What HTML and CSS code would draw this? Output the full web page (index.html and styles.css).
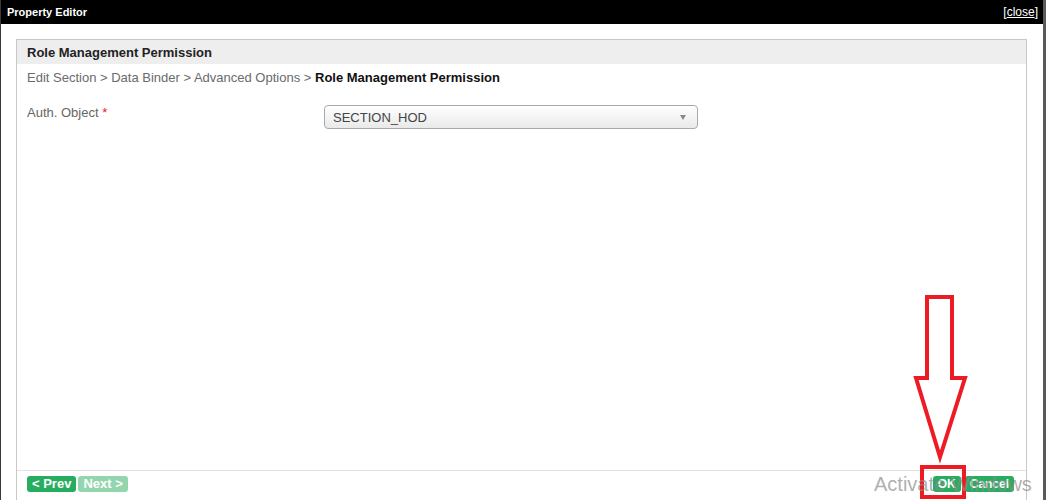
FILE: index.html
```html
<!DOCTYPE html>
<html>
<head>
<meta charset="utf-8">
<link rel="stylesheet" href="styles.css">
</head>
<body>
<div class="window">
  <div class="titlebar">
    <span class="title">Property Editor</span>
    <span class="close">[<a href="#">close</a>]</span>
  </div>
  <div class="content">
    <div class="panel">
      <div class="panel-head">Role Management Permission</div>
      <div class="crumbs">Edit Section &gt; Data Binder &gt; Advanced Options &gt; <b>Role Management Permission</b></div>
      <div class="form-row">
        <div class="label">Auth. Object <span class="req">*</span></div>
        <div class="select"><span>SECTION_HOD</span><span class="caret"></span></div>
      </div>
      <div class="footer">
        <div class="left-btns">
          <span class="btn">&lt; Prev</span>
          <span class="btn disabled">Next &gt;</span>
        </div>
        <div class="right-btns">
          <span class="btn small">OK</span>
          <span class="btn small">Cancel</span>
        </div>
      </div>
    </div>
  </div>
  <svg class="arrow" width="60" height="170" viewBox="0 0 60 170">
    <path d="M14 3 H39 V84 H52 L27 163 L3 84 H14 Z" fill="none" stroke="#ed1c24" stroke-width="4" stroke-linejoin="miter"/>
  </svg>
  <div class="redbox"></div>
  <div class="watermark">Activate Windows</div>
</div>
</body>
</html>
```
FILE: styles.css
```css
html, body {
  margin: 0;
  padding: 0;
  background: #fff;
}
body {
  font-family: "Liberation Sans", Arial, sans-serif;
  width: 1046px;
  height: 500px;
  overflow: hidden;
}
.window {
  position: relative;
  width: 1046px;
  height: 500px;
  overflow: hidden;
  border-left: 1px solid #3a3a3a;
  border-right: 3px solid #5a5a5a;
  box-sizing: border-box;
}
.titlebar {
  height: 24px;
  background: #000;
  color: #fff;
  display: flex;
  align-items: center;
  justify-content: space-between;
  padding: 0 8px 0 6px;
  font-size: 12px;
  margin-right: -3px;
}
.title {
  font-weight: bold;
  font-size: 11px;
}
.close {
  color: #fff;
  font-size: 12px;
}
.close a {
  color: #fff;
  text-decoration: underline;
}
.content {
  padding: 15px 0 0 15px;
}
.panel {
  width: 1011px;
  height: 480px;
  border: 1px solid #c8c8c8;
  box-sizing: border-box;
  display: flex;
  flex-direction: column;
}
.panel-head {
  background: #eeeeee;
  height: 24px;
  line-height: 25px;
  padding-left: 10px;
  font-size: 13px;
  font-weight: bold;
  color: #222;
}
.crumbs {
  padding: 6px 0 0 10px;
  font-size: 13px;
  color: #6a6a6a;
  line-height: 16px;
}
.crumbs b {
  color: #111;
}
.form-row {
  display: flex;
  padding: 19px 0 0 10px;
}
.label {
  width: 297px;
  font-size: 13px;
  color: #666;
  padding-top: 0;
}
.req {
  color: #e8202a;
}
.select {
  width: 374px;
  height: 24px;
  box-sizing: border-box;
  border: 1px solid #aaa;
  border-radius: 4px;
  background: linear-gradient(#ffffff 0%, #f4f4f4 50%, #e9e9e9 100%);
  display: flex;
  align-items: center;
  justify-content: space-between;
  padding: 0 11px 0 8px;
  font-size: 13px;
  color: #444;
}
.caret {
  width: 0;
  height: 0;
  border-left: 3px solid transparent;
  border-right: 3px solid transparent;
  border-top: 5px solid #888;
}
.footer {
  margin-top: auto;
  margin-bottom: 17px;
  border-top: 1px solid #e3e3e3;
  height: 25px;
  padding: 5px 12px 0 10px;
  display: flex;
  justify-content: space-between;
  align-items: flex-start;
}
.left-btns, .right-btns {
  display: flex;
  gap: 2px;
}
.right-btns {
  gap: 4px;
}
.btn {
  background: #27ad5f;
  color: #fff;
  font-size: 13px;
  font-weight: bold;
  height: 16px;
  line-height: 16px;
  padding: 0 5px;
  border-radius: 3px;
}
.btn.small {
  font-size: 12px;
}
.btn.disabled {
  background: #93d6ad;
}
.arrow {
  position: absolute;
  left: 912px;
  top: 294px;
}
.redbox {
  position: absolute;
  left: 919px;
  top: 465px;
  width: 38px;
  height: 26px;
  border: 4px solid #ed1c24;
}
.watermark {
  position: absolute;
  left: 873px;
  top: 473px;
  font-family: "Liberation Sans", Arial, sans-serif;
  font-size: 20px;
  color: rgba(140, 140, 140, 0.7);
  white-space: nowrap;
}
```
